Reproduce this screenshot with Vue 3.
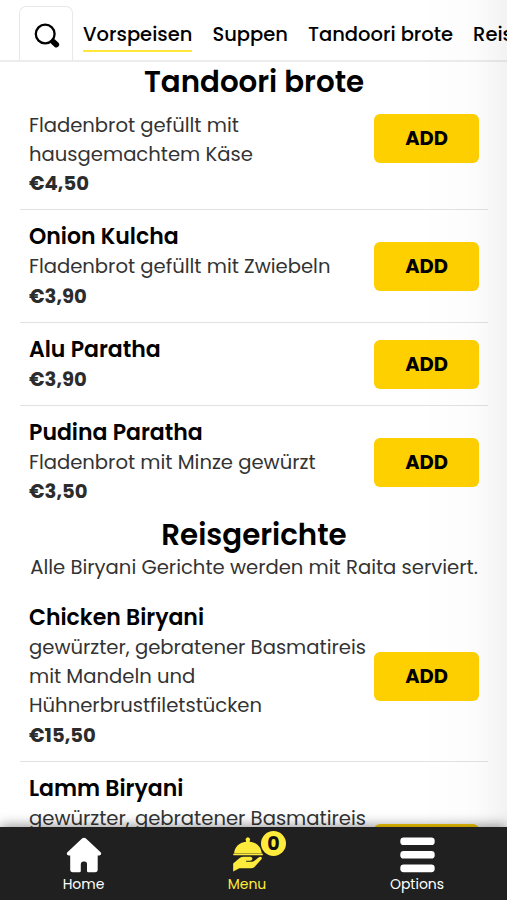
<script setup>
const tabs = [
  { label: 'Vorspeisen', active: true },
  { label: 'Suppen' },
  { label: 'Tandoori brote' },
  { label: 'Reisgerichte' },
]
const breads = [
  { lines: ['Fladenbrot gefüllt mit', 'hausgemachtem Käse'], price: '€4,50', continued: true },
  { name: 'Onion Kulcha', lines: ['Fladenbrot gefüllt mit Zwiebeln'], price: '€3,90' },
  { name: 'Alu Paratha', lines: [], price: '€3,90' },
  { name: 'Pudina Paratha', lines: ['Fladenbrot mit Minze gewürzt'], price: '€3,50' },
]
const rice = [
  {
    name: 'Chicken Biryani',
    lines: ['gewürzter, gebratener Basmatireis', 'mit Mandeln und', 'Hühnerbrustfiletstücken'],
    price: '€15,50',
  },
  { name: 'Lamm Biryani', lines: ['gewürzter, gebratener Basmatireis'], tall: true },
]
const sections = [
  { title: 'Tandoori brote', items: breads, sticky: true },
  { title: 'Reisgerichte', note: 'Alle Biryani Gerichte werden mit Raita serviert.', items: rice },
]
</script>

<template>
  <div class="screen">
    <header class="topbar">
      <button class="search" aria-label="Suche">
        <svg width="28" height="28" viewBox="0 0 28 28">
          <circle cx="12.2" cy="12" r="9.4" fill="none" stroke="#000" stroke-width="2.3" />
          <path d="M18.7 18.3l2 2" stroke="#000" stroke-width="2.4" />
          <path d="M20.1 19.6l3.2 3" stroke="#000" stroke-width="5.6" stroke-linecap="round" />
        </svg>
      </button>
      <nav class="tabs">
        <span v-for="t in tabs" :key="t.label" class="tab" :class="{ active: t.active }">{{ t.label }}</span>
      </nav>
    </header>

    <main class="content">
      <section v-for="s in sections" :key="s.title" class="section">
        <h2 :class="{ sticky: s.sticky }">{{ s.title }}</h2>
        <p v-if="s.note" class="note">{{ s.note }}</p>
        <article v-for="(item, i) in s.items" :key="i" class="item" :class="{ continued: item.continued, tall: item.tall }">
          <div class="info">
            <h3 v-if="item.name">{{ item.name }}</h3>
            <p v-for="line in item.lines" :key="line" class="desc">{{ line }}</p>
            <p v-if="item.price" class="price">{{ item.price }}</p>
          </div>
          <button class="add"><span v-if="!item.tall">ADD</span></button>
        </article>
      </section>
    </main>

    <div class="edge"></div>

    <footer class="bottom">
      <a class="link">
        <svg width="36" height="36" viewBox="0 0 36 36">
          <path fill="#fff" d="M16.3 1.3Q18 0 19.7 1.3L34.6 15.2Q36.2 17.4 33.5 18.6H31.7V32.5Q31.7 35.3 29 35.3H22.2Q21 35.3 21 34V27Q21 24.5 18.5 24.5H17.2Q14.8 24.5 14.8 27V34Q14.8 35.3 13.5 35.3H6.8Q4.2 35.3 4.2 32.5V18.6H2.5Q-.2 17.4 1.4 15.2Z" />
        </svg>
        <span>Home</span>
      </a>
      <a class="link current">
        <svg width="36" height="36" viewBox="0 0 36 36">
          <g fill="#ffeb3b" transform="translate(3.2 .6) scale(.96)">
            <path d="M14.4 3.4A2.3 2.3 0 1 1 18.2 3.4V4.2C26 5 30.2 10 30.8 16.2H2C2.6 10 6.8 5 14.4 4.2Z" />
            <rect x="1" y="16.6" width="31" height="1.9" rx=".9" />
            <path d="M1 27L7.8 21.2Q9.6 19.9 12 19.9H19.2Q21.4 20.4 21 22.2Q20.7 23.9 18.8 24.2H14.5V25.2H20.3Q22 25.2 23.2 24L27.8 20.4Q29.5 19.4 30.7 20.6Q31.4 21.6 30.2 22.9L23.2 30.6Q21.8 32 19.6 32H7.5L1 35.2Z" />
          </g>
        </svg>
        <b class="badge">0</b>
        <span>Menu</span>
      </a>
      <a class="link">
        <svg width="36" height="36" viewBox="0 0 36 36" fill="#fff">
          <rect x="1.3" y="0.5" width="34.4" height="7.6" rx="3.4" />
          <rect x="1.3" y="14" width="34.4" height="7.6" rx="3.4" />
          <rect x="1.3" y="27.6" width="34.4" height="7.6" rx="3.4" />
        </svg>
        <span>Options</span>
      </a>
    </footer>
  </div>
</template>

<style>
body {
  overflow: hidden;
}
</style>

<style scoped>
.screen {
  position: relative;
  display: flex;
  flex-direction: column;
  width: 507px;
  height: 900px;
  overflow: hidden;
  background: #fff;
  color: #000;
  font-family: Poppins, Inter, 'Open Sans', sans-serif;
}
h2, h3, p { margin: 0; }
button { font-family: inherit; padding: 0; }
.topbar {
  display: flex;
  align-items: flex-end;
  flex: none;
  height: 62px;
  padding-left: 19px;
  box-sizing: border-box;
  border-bottom: 2px solid #ececec;
}
.search {
  flex: none;
  display: flex;
  align-items: center;
  justify-content: center;
  width: 54px;
  height: 54px;
  padding: 5px 0 0 2px;
  border: 1.5px solid #e8e8e8;
  border-bottom: 0;
  border-radius: 7px 7px 0 0;
  background: #fff;
}
.tabs {
  display: flex;
  gap: 20px;
  margin: 0 0 8px 10px;
  white-space: nowrap;
}
.tab {
  font-size: 19.5px;
  font-weight: 500;
  line-height: 28px;
  padding-bottom: 1px;
  border-bottom: 2px solid transparent;
}
.active { border-color: #ffe838; }
.content {
  flex: 1;
  min-height: 0;
  overflow: hidden;
  padding: 0 19px 0 20px;
}
h2 {
  font-size: 29.3px;
  font-weight: 600;
  line-height: 33px;
  text-align: center;
}
h2.sticky { padding: 3px 0 12.8px; }
.note {
  font-size: 19.6px;
  line-height: 29.3px;
  padding: 1.5px 0 8.9px;
  text-align: center;
  color: #333;
  white-space: nowrap;
}
.item {
  display: flex;
  align-items: center;
  justify-content: space-between;
  padding: 12.2px 9px 10.7px;
  border-bottom: 1px solid #e2e2e2;
}
.item:last-child { border-bottom-color: transparent; }
.continued { padding-top: 0; }
.continued .add { margin-bottom: 32px; }
.info { white-space: nowrap; }
.tall { min-height: 149px; }
.tall .info { align-self: flex-start; }
h3 {
  font-size: 22px;
  font-weight: 600;
  line-height: 30px;
}
.desc, .price {
  font-size: 19.6px;
  line-height: 29.25px;
  color: #333;
}
.price { font-weight: 700; color: #2c2c2c; }
.add {
  flex: none;
  width: 105px;
  height: 49px;
  margin-left: -10px;
  border: 0;
  border-radius: 6px;
  background: #ffd000;
  color: #000;
  font-size: 19.5px;
  font-weight: 700;
}
.edge {
  position: absolute;
  top: 0;
  right: 0;
  width: 90px;
  height: 100%;
  background: linear-gradient(to right, rgba(0, 0, 0, 0), rgba(0, 0, 0, 0.012) 65%, rgba(0, 0, 0, 0.05));
  pointer-events: none;
}
.bottom {
  position: relative;
  flex: none;
  display: grid;
  grid-template-columns: 167px 160px 180px;
  height: 73px;
  background: #202020;
  box-shadow: 0 -1px 12px rgba(0, 0, 0, 0.45);
  color: #fff;
}
.link {
  position: relative;
  display: flex;
  flex-direction: column;
  align-items: center;
  padding-top: 10px;
  font-size: 14px;
  line-height: 20px;
}
.link svg { flex: none; margin-bottom: 1px; }
.current { color: #ffeb3b; }
.badge {
  position: absolute;
  left: 94px;
  top: 4px;
  width: 25px;
  height: 25px;
  border-radius: 50%;
  background: #ffeb3b;
  color: #111;
  font-size: 19px;
  line-height: 25px;
  text-align: center;
}
</style>
